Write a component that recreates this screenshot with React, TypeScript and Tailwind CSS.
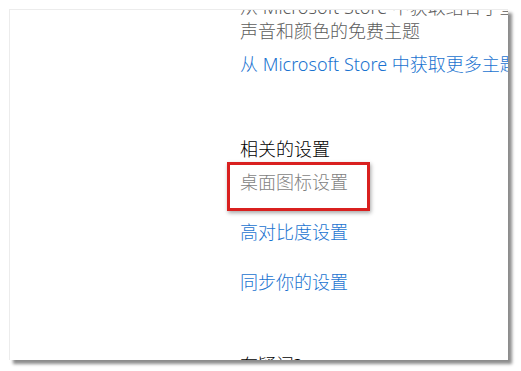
const font = "font-['Segoe_UI','Noto_Sans','Noto_Sans_CJK_SC',sans-serif]";

const Link = ({ children, className = "" }: { children: React.ReactNode; className?: string }) => (
  <a href="#" className={`block text-[#1a73d0] ${className}`}>
    {children}
  </a>
);

export default function App() {
  return (
    <div className={`h-[371px] w-[521px] bg-white pl-[9px] pt-[9px] font-light ${font}`}>
      <div className="h-[351px] w-[499px] overflow-hidden border-l border-t border-[#ececec] bg-white shadow-[4px_4px_3px_rgba(0,0,0,0.45)]">
        <div className="-mt-[15px] whitespace-nowrap pl-[230px] text-[18px] leading-[24px]">
          <p className="text-[#5c5c5c]">
            从 Microsoft Store 中获取结合了壁纸、
            <br />
            声音和颜色的免费主题
          </p>
          <Link className="mt-[9px]">从 Microsoft Store 中获取更多主题</Link>

          <h3 className="mt-[61px] text-black">相关的设置</h3>

          <div className="relative mt-[9px] inline-block text-[#7f7f7f]">
            桌面图标设置
            <span className="absolute -left-[13px] -top-[8px] h-[49px] w-[143px] border-[3px] border-[#d9201f] shadow-[1px_2px_4px_rgba(0,0,0,0.35)]" />
          </div>

          <Link className="mt-[26px]">高对比度设置</Link>
          <Link className="mt-[26px]">同步你的设置</Link>

          <h3 className="mt-[59px] text-black">有疑问?</h3>
        </div>
      </div>
    </div>
  );
}
